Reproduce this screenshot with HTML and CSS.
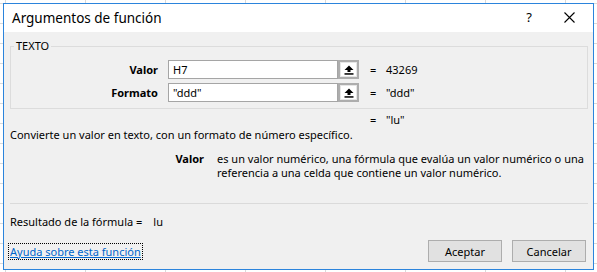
FILE: index.html
```html
<!DOCTYPE html>
<html lang="es">
<head>
<meta charset="utf-8">
<title>Argumentos de función</title>
<link rel="stylesheet" href="styles.css">
</head>
<body>
<div class="dialog">
  <div class="titlebar">
    <span class="title">Argumentos de función</span>
    <span class="help">?</span>
    <svg class="close" width="11" height="11" viewBox="0 0 11 11"><path d="M0.5 0.5 L10.5 10.5 M10.5 0.5 L0.5 10.5" stroke="#000" stroke-width="1.1" fill="none"/></svg>
  </div>
  <div class="content">
    <div class="group">
      <span class="legend">TEXTO</span>
      <div class="arg-row">
        <span class="arg-label">Valor</span>
        <span class="arg-input">H7</span>
        <span class="picker"><svg width="10" height="10" viewBox="0 0 10 10"><path d="M5 0.5 L9.5 5 L6.5 5 L6.5 7 L3.5 7 L3.5 5 L0.5 5 Z" fill="#000"/><rect x="0.5" y="8.2" width="9" height="1.5" fill="#000"/></svg></span>
        <span class="eq">=</span>
        <span class="arg-value">43269</span>
      </div>
      <div class="arg-row">
        <span class="arg-label">Formato</span>
        <span class="arg-input">"ddd"</span>
        <span class="picker"><svg width="10" height="10" viewBox="0 0 10 10"><path d="M5 0.5 L9.5 5 L6.5 5 L6.5 7 L3.5 7 L3.5 5 L0.5 5 Z" fill="#000"/><rect x="0.5" y="8.2" width="9" height="1.5" fill="#000"/></svg></span>
        <span class="eq">=</span>
        <span class="arg-value">"ddd"</span>
      </div>
    </div>
    <div class="result-line"><span class="eq">=</span><span class="arg-value">"lu"</span></div>
    <p class="desc">Convierte un valor en texto, con un formato de número específico.</p>
    <div class="argdesc">
      <span class="argdesc-name">Valor</span>
      <span class="argdesc-text">es un valor numérico, una fórmula que evalúa un valor numérico o una referencia a una celda que contiene un valor numérico.</span>
    </div>
    <div class="separator"></div>
    <div class="formula">Resultado de la fórmula =<span class="formula-value">lu</span></div>
    <div class="footer">
      <a class="help-link" href="#">Ayuda sobre esta función</a>
      <div class="buttons">
        <button class="btn">Aceptar</button>
        <button class="btn">Cancelar</button>
      </div>
    </div>
  </div>
</div>
</body>
</html>
```
FILE: styles.css
```css
html, body {
  margin: 0;
  padding: 0;
}
body {
  width: 597px;
  height: 272px;
  overflow: hidden;
  background-color: #ffffff;
  background-image:
    repeating-linear-gradient(to right, transparent 0, transparent 5px, #d9d9d9 5px, #d9d9d9 6px, transparent 6px, transparent 80px),
    repeating-linear-gradient(to bottom, transparent 0, transparent 3px, #d9d9d9 3px, #d9d9d9 4px, transparent 4px, transparent 20px);
  padding: 3px 0 0 3px;
  box-sizing: border-box;
  font-family: "Noto Sans", "Open Sans", sans-serif;
  font-size: 11px;
  color: #000;
}
.dialog {
  width: 591px;
  height: 267px;
  box-sizing: border-box;
  border: 1px solid #2b84dc;
  background: #f0f0f0;
  display: flex;
  flex-direction: column;
}
.titlebar {
  height: 28px;
  background: #ffffff;
  display: flex;
  align-items: center;
  padding-left: 8px;
  flex-shrink: 0;
}
.title {
  font-size: 13.5px;
  flex: 1;
  padding-bottom: 1px;
}
.help {
  font-size: 13px;
  margin-right: 32px;
  padding-bottom: 2px;
}
.close {
  margin-right: 18px;
  margin-bottom: 2px;
}
.content {
  flex: 1;
  display: flex;
  flex-direction: column;
  padding: 0 7px 0 6px;
}
.group {
  position: relative;
  margin-top: 14px;
  margin-right: -2px;
  border: 1px solid #dcdcdc;
  height: 63px;
  box-sizing: border-box;
  padding-top: 13px;
  display: flex;
  flex-direction: column;
  gap: 4px;
  flex-shrink: 0;
}
.legend {
  position: absolute;
  left: 3px;
  top: -9px;
  padding: 0 2px;
  background: #f0f0f0;
  line-height: 16px;
}
.arg-row {
  display: flex;
  align-items: center;
  height: 19px;
}
.arg-label {
  width: 147px;
  text-align: right;
  font-weight: bold;
  margin-right: 10px;
}
.arg-input {
  width: 170px;
  height: 19px;
  box-sizing: border-box;
  border: 1px solid #a5a5a5;
  background: #fff;
  padding-left: 4px;
  line-height: 17px;
}
.picker {
  width: 21px;
  height: 19px;
  box-sizing: border-box;
  border: 2px solid #adadad;
  box-shadow: inset 0 0 0 1px #e6e6e6;
  background: #fff;
  display: flex;
  align-items: center;
  justify-content: center;
}
.eq {
  margin-left: 11px;
  width: 16px;
}
.result-line {
  display: flex;
  height: 16px;
  line-height: 16px;
  margin-top: 3px;
  padding-left: 349px;
  flex-shrink: 0;
}
.desc {
  margin: 0;
  line-height: 14px;
  flex-shrink: 0;
}
.argdesc {
  display: flex;
  margin-top: 10px;
  line-height: 14px;
  flex-shrink: 0;
}
.argdesc-name {
  width: 194px;
  text-align: right;
  font-weight: bold;
  margin-right: 13px;
  flex-shrink: 0;
}
.argdesc-text {
  width: 372px;
}
.separator {
  margin-top: 23px;
  margin-right: -2px;
  height: 1px;
  background: #dadada;
  flex-shrink: 0;
}
.formula {
  margin-top: 11px;
  line-height: 14px;
  flex-shrink: 0;
}
.formula-value {
  margin-left: 11px;
}
.footer {
  margin-top: 11px;
  height: 22px;
  display: flex;
  align-items: center;
  justify-content: space-between;
  flex-shrink: 0;
}
.help-link {
  color: #0066cc;
  text-decoration: underline;
  border: 1px dotted #000;
  padding: 0 1px;
  margin-left: -2px;
  line-height: 15px;
}
.buttons {
  display: flex;
  gap: 10px;
}
.btn {
  width: 74px;
  height: 22px;
  border: 1px solid #adadad;
  background: #e1e1e1;
  font-family: inherit;
  font-size: 11px;
  color: #000;
  padding: 0;
}
```
